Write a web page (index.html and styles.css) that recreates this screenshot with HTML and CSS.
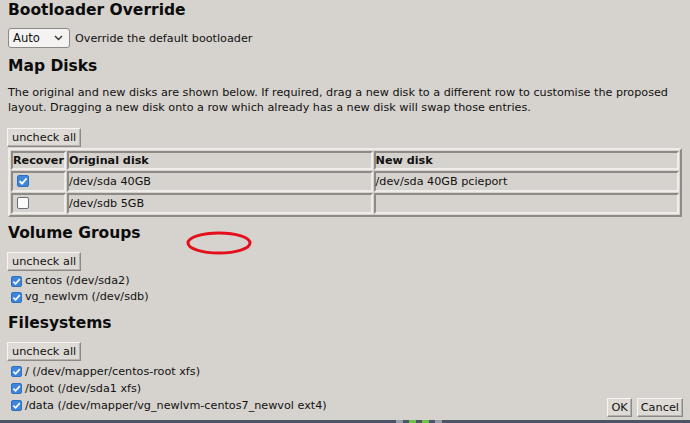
FILE: index.html
```html
<!DOCTYPE html>
<html>
<head>
<meta charset="utf-8">
<link rel="stylesheet" href="styles.css">
</head>
<body>
<div class="page">
  <h2 class="h h-first">Bootloader Override</h2>
  <div class="row-select">
    <div class="select"><span>Auto</span>
      <svg width="9" height="6" viewBox="0 0 9 6"><path d="M1 1 L4.5 4.5 L8 1" fill="none" stroke="#333" stroke-width="1.4"/></svg>
    </div>
    <span>Override the default bootloader</span>
  </div>

  <h2 class="h h-map">Map Disks</h2>
  <p class="desc">The original and new disks are shown below. If required, drag a new disk to a different row to customise the proposed layout. Dragging a new disk onto a row which already has a new disk will swap those entries.</p>

  <button class="btn btn-uncheck1">uncheck all</button>
  <table class="disks">
    <tr><th class="c-rec">Recover</th><th>Original disk</th><th>New disk</th></tr>
    <tr><td class="c-rec"><span class="cb big on"><svg viewBox="0 0 12 12"><path d="M2.6 6.2 L5 8.6 L9.6 3.4" fill="none" stroke="#fff" stroke-width="1.8"/></svg></span></td><td>/dev/sda 40GB</td><td>/dev/sda 40GB pcieport</td></tr>
    <tr><td class="c-rec"><span class="cb big off"></span></td><td>/dev/sdb 5GB</td><td></td></tr>
  </table>

  <h2 class="h h-vg">Volume Groups</h2>
  <button class="btn btn-uncheck">uncheck all</button>
  <ul class="checks">
    <li><span class="cb on"><svg viewBox="0 0 12 12"><path d="M2.6 6.2 L5 8.6 L9.6 3.4" fill="none" stroke="#fff" stroke-width="1.8"/></svg></span>centos (/dev/sda2)</li>
    <li><span class="cb on"><svg viewBox="0 0 12 12"><path d="M2.6 6.2 L5 8.6 L9.6 3.4" fill="none" stroke="#fff" stroke-width="1.8"/></svg></span>vg_newlvm (/dev/sdb)</li>
  </ul>

  <h2 class="h h-fs">Filesystems</h2>
  <button class="btn btn-uncheck">uncheck all</button>
  <div class="footer">
    <ul class="checks checks-fs">
      <li><span class="cb on"><svg viewBox="0 0 12 12"><path d="M2.6 6.2 L5 8.6 L9.6 3.4" fill="none" stroke="#fff" stroke-width="1.8"/></svg></span>/ (/dev/mapper/centos-root xfs)</li>
      <li><span class="cb on"><svg viewBox="0 0 12 12"><path d="M2.6 6.2 L5 8.6 L9.6 3.4" fill="none" stroke="#fff" stroke-width="1.8"/></svg></span>/boot (/dev/sda1 xfs)</li>
      <li><span class="cb on"><svg viewBox="0 0 12 12"><path d="M2.6 6.2 L5 8.6 L9.6 3.4" fill="none" stroke="#fff" stroke-width="1.8"/></svg></span>/data (/dev/mapper/vg_newlvm-centos7_newvol ext4)</li>
    </ul>
    <div class="actions">
      <button class="btn">OK</button>
      <button class="btn">Cancel</button>
    </div>
  </div>
</div>
<div class="taskbar">
  <span class="tb-gap"></span>
  <span class="tb-ico tb-grey"></span>
  <span class="tb-ico tb-green"></span>
  <span class="tb-ico tb-green"></span>
  <span class="tb-ico tb-grey"></span>
</div>
<svg class="annot" width="70" height="28" viewBox="0 0 70 28"><ellipse cx="35" cy="14" rx="31" ry="10" fill="none" stroke="#e3101c" stroke-width="3"/></svg>
</body>
</html>
```

FILE: styles.css
```css
html, body {
  margin: 0;
  padding: 0;
  width: 690px;
  height: 423px;
  overflow: hidden;
  background: #d6d3ce;
}
body {
  position: relative;
  font-family: "DejaVu Sans", sans-serif;
  font-size: 11.2px;
  color: #111;
}
.page {
  padding: 0 8px;
}
.h {
  margin: 0;
  font-size: 15.5px;
  font-weight: bold;
  line-height: 20px;
  color: #0c0c0c;
}
.row-select {
  display: flex;
  align-items: center;
  gap: 5px;
  margin-top: 8px;
  height: 20px;
}
.select {
  box-sizing: border-box;
  width: 62px;
  height: 20px;
  display: flex;
  align-items: center;
  justify-content: space-between;
  padding: 0 6px 0 4px;
  background: #f4f3f2;
  border: 1px solid #8c8a87;
  border-radius: 3px;
  font-size: 11.6px;
}
.h-map { margin-top: 8px; }
.desc {
  margin: 9px 0 0;
  line-height: 15px;
}
.btn {
  box-sizing: border-box;
  font-family: "DejaVu Sans", sans-serif;
  font-size: 11.3px;
  color: #111;
  background: #dedbd6;
  border: 1px solid;
  border-color: #f6f5f3 #8d8a86 #8d8a86 #f6f5f3;
  box-shadow: inset -1px -1px 0 #b5b2ad;
  padding: 0 4px;
  height: 19px;
  line-height: 16px;
  border-radius: 0;
  margin: 0;
}
.btn-uncheck1 { margin-top: 13px; margin-left: -1px; display: block; }
.disks {
  width: 100%;
  margin-top: 1px;
  border-collapse: separate;
  border-spacing: 1px;
  border: 2px solid;
  border-color: #efedea #8e8b87 #8e8b87 #efedea;
}
.disks th, .disks td {
  border: 2px solid;
  border-color: #8e8b87 #efedea #efedea #8e8b87;
  padding: 0;
  text-align: left;
  height: 15px;
  line-height: 15px;
}
.disks th { font-weight: bold; }
.disks td { height: 17px; line-height: 17px; }
.disks th:not(.c-rec), .disks td:not(.c-rec) { width: 50%; }
.c-rec { white-space: nowrap; }
.disks td.c-rec { padding-left: 4px; }
.cb {
  display: inline-block;
  box-sizing: border-box;
  width: 11px;
  height: 11px;
  border-radius: 2px;
  vertical-align: -1px;
  flex: none;
}
.cb.big { width: 12px; height: 12px; vertical-align: -2px; }
.cb svg { display: block; margin: -1px; width: calc(100% + 2px); height: calc(100% + 2px); }
.cb.on { background: #3d86dc; border: 1px solid #2f6fbe; }
.cb.off { background: #fbfbfb; border: 1px solid #6f6c78; }
.h-vg { margin-top: 6px; }
.btn-uncheck { display: block; margin-top: 9px; margin-left: -1px; }
.checks {
  list-style: none;
  margin: 2px 0 0;
  padding: 0 0 0 3px;
}
.checks li {
  line-height: 16px;
  display: flex;
  align-items: center;
  gap: 3px;
}
.h-fs { margin-top: 8px; }
.footer {
  display: flex;
  justify-content: space-between;
  align-items: flex-end;
}
.checks-fs { margin-top: 2px; }
.checks-fs li { line-height: 17px; }
.actions {
  display: flex;
  gap: 5px;
  margin-right: -1px;
  margin-bottom: -3px;
}
.actions .btn { height: 19px; padding: 0 3px; }
.taskbar {
  position: absolute;
  left: 0;
  right: 0;
  bottom: 0;
  height: 3px;
  background: #4c5566;
  display: flex;
  gap: 6px;
}
.tb-gap { width: 390px; }
.tb-ico { width: 7px; height: 3px; }
.tb-grey { background: #9aa0a8; }
.tb-green { background: #6cc24a; }
.annot {
  position: absolute;
  left: 184px;
  top: 229px;
}
```
